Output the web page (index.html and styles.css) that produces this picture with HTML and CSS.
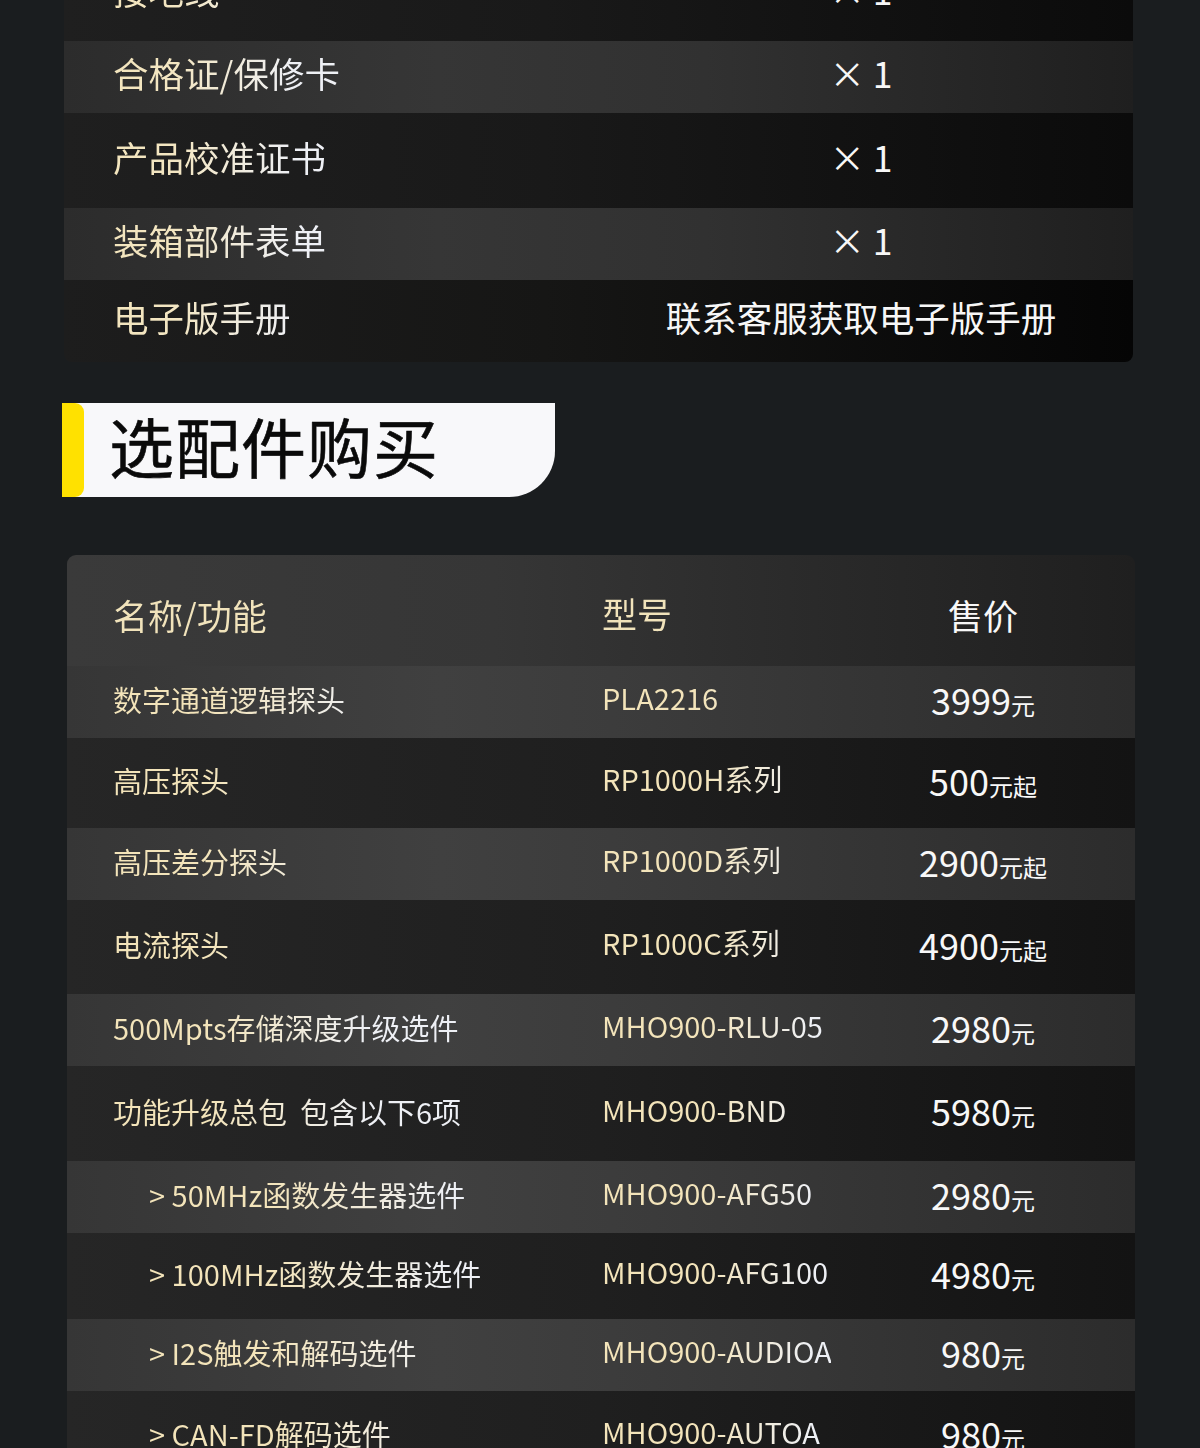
FILE: index.html
```html
<!DOCTYPE html>
<html lang="zh-CN">
<head>
<meta charset="utf-8">
<title>选配件购买</title>
<link rel="stylesheet" href="styles.css">
</head>
<body>
<div class="page">
  <section class="pack">
    <div class="prow dark h95"><div class="pname">接地线</div><div class="pval">× 1</div></div>
    <div class="prow light h72"><div class="pname">合格证/保修卡</div><div class="pval">× 1</div></div>
    <div class="prow dark h95"><div class="pname">产品校准证书</div><div class="pval">× 1</div></div>
    <div class="prow light h72"><div class="pname">装箱部件表单</div><div class="pval">× 1</div></div>
    <div class="prow darker h82"><div class="pname">电子版手册</div><div class="pval">联系客服获取电子版手册</div></div>
  </section>

  <h2 class="section-title"><span class="bar"></span><span class="title-text">选配件购买</span></h2>

  <section class="acc">
    <div class="arow head"><div class="c-name">名称/功能</div><div class="c-model">型号</div><div class="c-price">售价</div></div>
    <div class="arow light h72"><div class="c-name">数字通道逻辑探头</div><div class="c-model">PLA2216</div><div class="c-price">3999<small>元</small></div></div>
    <div class="arow dark h90"><div class="c-name">高压探头</div><div class="c-model">RP1000H系列</div><div class="c-price">500<small>元起</small></div></div>
    <div class="arow light h72"><div class="c-name">高压差分探头</div><div class="c-model">RP1000D系列</div><div class="c-price">2900<small>元起</small></div></div>
    <div class="arow dark h94"><div class="c-name">电流探头</div><div class="c-model">RP1000C系列</div><div class="c-price">4900<small>元起</small></div></div>
    <div class="arow light h72"><div class="c-name">500Mpts存储深度升级选件</div><div class="c-model">MHO900-RLU-05</div><div class="c-price">2980<small>元</small></div></div>
    <div class="arow dark h95"><div class="c-name">功能升级总包&nbsp; 包含以下6项</div><div class="c-model">MHO900-BND</div><div class="c-price">5980<small>元</small></div></div>
    <div class="arow light h72"><div class="c-name sub">&gt; 50MHz函数发生器选件</div><div class="c-model">MHO900-AFG50</div><div class="c-price">2980<small>元</small></div></div>
    <div class="arow dark h86"><div class="c-name sub">&gt; 100MHz函数发生器选件</div><div class="c-model">MHO900-AFG100</div><div class="c-price">4980<small>元</small></div></div>
    <div class="arow light h72"><div class="c-name sub">&gt; I2S触发和解码选件</div><div class="c-model">MHO900-AUDIOA</div><div class="c-price">980<small>元</small></div></div>
    <div class="arow dark h90"><div class="c-name sub">&gt; CAN-FD解码选件</div><div class="c-model">MHO900-AUTOA</div><div class="c-price">980<small>元</small></div></div>
  </section>
</div>
</body>
</html>
```

FILE: styles.css
```css
* { box-sizing: border-box; }
html, body { margin: 0; padding: 0; }
body {
  background: #1a1d1f;
  font-family: "Noto Sans CJK SC", "Noto Sans", sans-serif;
  color: #f6f6f6;
  overflow: hidden;
}
.page { width: 1200px; }

/* packing list card */
.pack {
  margin: -54px 0 0 64px;
  width: 1069px;
  border-radius: 8px;
  overflow: hidden;
}
.prow {
  display: grid;
  grid-template-columns: 525px 1fr;
  align-items: center;
  padding-bottom: 7px;
  font-size: 35.5px;
  line-height: 1.2;
  white-space: nowrap;
}
.pname {
  padding-left: 49px;
  background: linear-gradient(90deg, #f3e4ba 0px, #f3e6c2 110px, #eef0f5 230px);
  -webkit-background-clip: text;
  background-clip: text;
  color: transparent;
}
.pval { text-align: center; color: #f7f7f7; }
.prow.light { background: linear-gradient(90deg, #2c2c2c 0%, #363636 35%, #313131 60%, #1f1f1f 100%); }
.prow.dark { background: linear-gradient(90deg, #1f1f1f 0%, #191919 45%, #0b0b0b 100%); }
.prow.darker { background: linear-gradient(90deg, #1d1d1d 0%, #161615 45%, #050505 100%); }

.h72 { height: 72px; }
.h82 { height: 82px; }
.h86 { height: 86px; }
.h90 { height: 90px; }
.h94 { height: 94px; }
.h95 { height: 95px; }

/* section title */
.section-title {
  margin: 41px 0 0 62px;
  width: 493px;
  height: 94px;
  display: flex;
  align-items: center;
  background: #f8f8fa;
  border-radius: 0 0 46px 0;
  font-size: 65px;
  font-weight: 400;
  color: #0a0a0a;
  line-height: 1;
}
.bar {
  align-self: stretch;
  width: 22px;
  background: #ffe100;
  border-radius: 0 9px 9px 0;
}
.title-text { margin: 0 0 9px 25px; letter-spacing: 1px; -webkit-text-stroke: 0.6px #0a0a0a; }

/* accessories table */
.acc {
  margin: 58px 0 0 67px;
  width: 1068px;
  border-radius: 9px 9px 0 0;
  overflow: hidden;
}
.arow {
  display: grid;
  grid-template-columns: 535px 229px 1fr;
  align-items: center;
  padding-bottom: 5px;
  font-size: 29px;
  line-height: 1.2;
  white-space: nowrap;
}
.arow.head {
  height: 111px;
  padding-top: 9px;
  padding-bottom: 0;
  font-size: 35px;
  background: linear-gradient(90deg, #3a3a3a 0%, #363636 40%, #2a2a2a 70%, #1f1f1f 100%);
}
.arow.light { background: linear-gradient(90deg, #363636 0%, #404040 35%, #3b3b3b 55%, #2c2c2c 100%); }
.arow.dark { background: linear-gradient(90deg, #262626 0%, #1f1f1f 50%, #131313 100%); }

.c-name {
  padding-left: 46px;
  background: linear-gradient(90deg, #f3e4ba 0px, #f3e4ba 140px, #eef0f5 300px);
  -webkit-background-clip: text;
  background-clip: text;
  color: transparent;
}
.c-name.sub { padding-left: 82px; background: linear-gradient(90deg, #f3e4ba 0px, #f3e4ba 200px, #eef0f5 380px); -webkit-background-clip: text; background-clip: text; }
.head .c-name { background: #f1e3bb; -webkit-background-clip: text; background-clip: text; }
.c-model {
  background: linear-gradient(90deg, #f3e4ba 0px, #f3e4ba 100px, #eef0f5 210px);
  -webkit-background-clip: text;
  background-clip: text;
  color: transparent;
  margin-top: -4px;
}
.head .c-model { background: #f1e3bb; -webkit-background-clip: text; background-clip: text; }
.c-price {
  text-align: center;
  color: #f8f8f8;
  font-size: 36px;
}
.head .c-price { font-size: 35px; }
.c-price small { font-size: 24px; }
```
